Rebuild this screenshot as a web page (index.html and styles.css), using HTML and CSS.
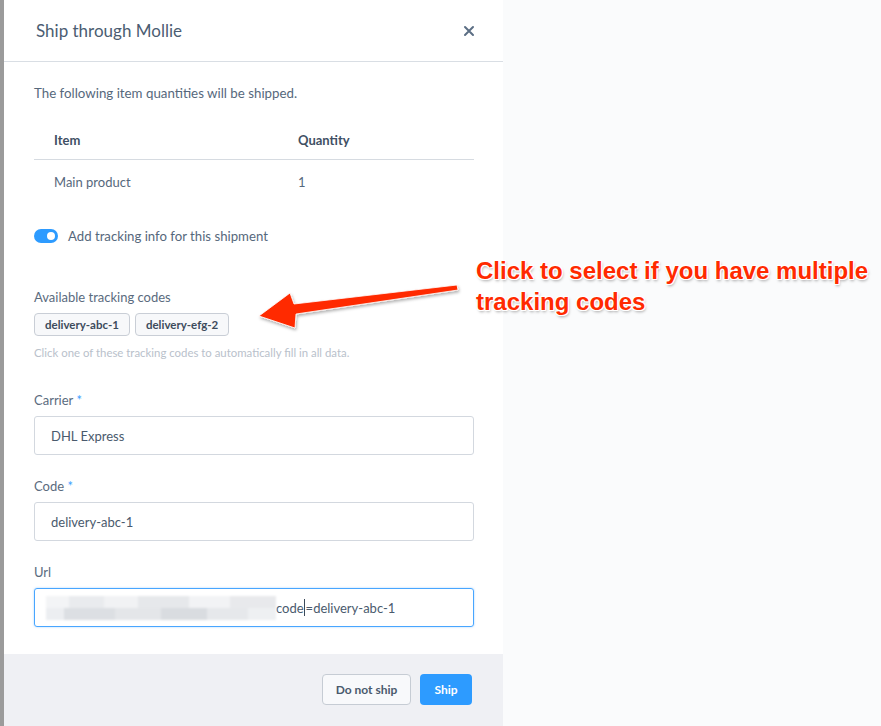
FILE: index.html
```html
<!DOCTYPE html>
<html lang="en">
<head>
<meta charset="utf-8">
<title>Ship through Mollie</title>
<link rel="stylesheet" href="styles.css">
</head>
<body>
<div class="page">
  <div class="edge"></div>
  <div class="modal">
    <div class="modal-header">
      <h1 class="modal-title">Ship through Mollie</h1>
      <svg class="close" width="12" height="12" viewBox="0 0 12 12"><path d="M2 2 L10 10 M10 2 L2 10" stroke="#5b6e84" stroke-width="2" stroke-linecap="round"/></svg>
    </div>
    <div class="modal-body">
      <p class="intro">The following item quantities will be shipped.</p>
      <div class="table">
        <div class="row head"><div class="cell c1">Item</div><div class="cell">Quantity</div></div>
        <div class="row"><div class="cell c1">Main product</div><div class="cell">1</div></div>
      </div>
      <div class="toggle-row">
        <span class="toggle"><span class="knob"></span></span>
        <span class="toggle-label">Add tracking info for this shipment</span>
      </div>
      <div class="label codes-label">Available tracking codes</div>
      <div class="chips">
        <span class="chip">delivery-abc-1</span>
        <span class="chip">delivery-efg-2</span>
      </div>
      <div class="hint">Click one of these tracking codes to automatically fill in all data.</div>
      <div class="field first">
        <div class="label">Carrier <span class="req">*</span></div>
        <div class="input">DHL Express</div>
      </div>
      <div class="field">
        <div class="label">Code <span class="req">*</span></div>
        <div class="input">delivery-abc-1</div>
      </div>
      <div class="field">
        <div class="label">Url</div>
        <div class="input focus"><span class="blur"></span><span>code</span><span class="caret"></span><span>=delivery-abc-1</span></div>
      </div>
    </div>
    <div class="modal-footer">
      <span class="btn secondary">Do not ship</span>
      <span class="btn primary">Ship</span>
    </div>
  </div>
  <div class="backdrop"></div>
</div>
<svg class="arrow" width="220" height="70" viewBox="0 0 220 70">
  <defs>
    <filter id="sh" x="-10%" y="-30%" width="120%" height="160%">
      <feDropShadow dx="1" dy="2" stdDeviation="1.5" flood-color="#000" flood-opacity="0.3"/>
    </filter>
  </defs>
  <polygon filter="url(#sh)" fill="#ff2a00" stroke="#fff" stroke-width="0.8" stroke-linejoin="round" points="9,46 40,23 44,34 207,15 208,20 46,44 45,58"/>
</svg>
<div class="callout">Click to select if you have multiple<br>tracking codes</div>
</body>
</html>
```

FILE: styles.css
```css
* { box-sizing: border-box; }
html, body { margin: 0; padding: 0; }
body {
  background: #fafbfc;
  font-family: Lato, "Noto Sans", sans-serif;
  width: 881px;
  height: 726px;
  overflow: hidden;
  position: relative;
}
.page {
  display: flex;
  height: 726px;
}
.edge {
  width: 4px;
  background: #9b9b9b;
}
.modal {
  width: 499px;
  background: #fff;
  display: flex;
  flex-direction: column;
}
.backdrop { flex: 1; }
.modal-header {
  height: 62px;
  border-bottom: 1px solid #d9dee4;
  display: flex;
  align-items: center;
  justify-content: space-between;
  padding: 0 28px 0 32px;
}
.modal-title {
  margin: 0;
  font-size: 17px;
  font-weight: 400;
  color: #4b5d72;
}
.close { display: block; margin-top: 0; }
.modal-body {
  padding: 22px 29px 0 30px;
  flex: 1;
}
.intro {
  margin: 0;
  font-size: 13.3px;
  line-height: 18px;
  color: #56687c;
}
.table {
  margin-top: 18px;
  font-size: 13px;
}
.row {
  display: flex;
  height: 44px;
  align-items: center;
  color: #56687c;
}
.row.head {
  height: 40px;
  border-bottom: 1px solid #d6dbe1;
  font-weight: 700;
  color: #3f5064;
}
.cell { padding-left: 20px; }
.cell.c1 { width: 244px; }
.toggle-row {
  display: flex;
  align-items: center;
  margin-top: 25px;
  height: 14px;
}
.toggle {
  width: 24px;
  height: 14px;
  border-radius: 7px;
  background: #2d9bff;
  position: relative;
  margin-right: 10px;
}
.knob {
  position: absolute;
  right: 3px;
  top: 3px;
  width: 8px;
  height: 8px;
  border-radius: 50%;
  background: #fff;
}
.toggle-label {
  font-size: 13.2px;
  color: #56687c;
}
.label {
  font-size: 13px;
  line-height: 18px;
  color: #5a6b7e;
}
.codes-label { margin-top: 45px; }
.req { color: #3ea0ff; }
.chips {
  display: flex;
  gap: 5px;
  margin-top: 7px;
}
.chip {
  height: 23px;
  padding: 0 10px;
  display: flex;
  align-items: center;
  border: 1px solid #c9ced6;
  border-radius: 4px;
  background: #f7f8fa;
  font-size: 11.5px;
  font-weight: 700;
  color: #3d4b5c;
}
.hint {
  margin-top: 10px;
  font-size: 11.4px;
  line-height: 14px;
  color: #b9c1cb;
}
.field { margin-top: 22px; }
.field.first { margin-top: 31px; }
.input {
  margin-top: 7px;
  height: 39px;
  border: 1px solid #d3d8df;
  border-radius: 3px;
  display: flex;
  align-items: center;
  padding-left: 16px;
  font-size: 13px;
  color: #4a5a6d;
}
.input.focus {
  border-color: #49a6ff;
  box-shadow: 0 0 2px rgba(62, 160, 255, 0.5);
  padding-left: 11px;
}
.blur {
  width: 230px;
  height: 24px;
  background:
    linear-gradient(to right, #f3f4f6 0 10%, #e9ebee 10% 25%, #f1f2f4 25% 40%, #e6e8eb 40% 62%, #f2f3f5 62% 80%, #e8e9ec 80% 100%) top / 100% 50% no-repeat,
    linear-gradient(to right, #eceef1 0 8%, #dcdfe3 8% 30%, #e4e6e9 30% 50%, #d9dce0 50% 70%, #e6e8eb 70% 88%, #eef0f2 88% 100%) bottom / 100% 50% no-repeat;
  filter: blur(0.8px);
}
.caret {
  width: 1px;
  height: 17px;
  background: #3c4a5a;
  margin: 0 0.5px;
}
.modal-footer {
  height: 72px;
  background: #eff0f4;
  display: flex;
  align-items: center;
  justify-content: flex-end;
  gap: 9px;
  padding: 0 31px 2px 0;
}
.btn {
  height: 31px;
  display: flex;
  align-items: center;
  border-radius: 4px;
  font-size: 12px;
  font-weight: 700;
}
.btn.secondary {
  width: 89px;
  justify-content: center;
  border: 1px solid #c6ccd4;
  background: #f8f9fb;
  color: #4a5a6d;
}
.btn.primary {
  width: 52px;
  justify-content: center;
  background: #2d9bff;
  color: #fff;
}
.arrow {
  position: absolute;
  left: 250px;
  top: 270px;
}
.callout {
  position: absolute;
  left: 476px;
  top: 255px;
  font-family: "Liberation Sans", Arial, sans-serif;
  font-weight: 700;
  font-size: 24px;
  line-height: 31px;
  color: #ff2a00;
  white-space: nowrap;
  text-shadow:
    1px 0 0 #fff, -1px 0 0 #fff, 0 1px 0 #fff, 0 -1px 0 #fff,
    1px 1px 0 #fff, -1px -1px 0 #fff, 1px -1px 0 #fff, -1px 1px 0 #fff,
    1px 2px 3px rgba(0, 0, 0, 0.35);
}
```
